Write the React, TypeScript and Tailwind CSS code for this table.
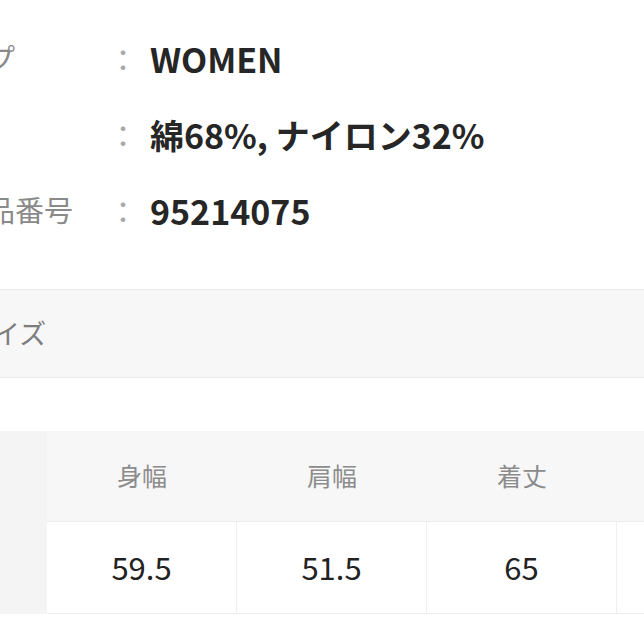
import React from 'react';

const font = { fontFamily: '"Noto Sans CJK JP", "Noto Sans", sans-serif' };

const specs = [
  { label: 'タイプ', value: 'WOMEN' },
  { label: '素材', value: '綿68%, ナイロン32%' },
  { label: '商品品番号', value: '95214075' },
];

const sizes = [
  { name: '身幅', value: '59.5' },
  { name: '肩幅', value: '51.5' },
  { name: '着丈', value: '65' },
  { name: '袖丈', value: '60' },
];

export default function App() {
  return (
    <div className="w-[644px] h-[644px] overflow-hidden bg-white" style={font}>
      <div className="pt-[20px] ml-[-72px]">
        {specs.map((s) => (
          <div key={s.label} className="flex items-center h-[76px]">
            <span className="w-[180px] shrink-0 text-[29px] text-[#8a8a8a] whitespace-nowrap">{s.label}</span>
            <span className="w-[24px] shrink-0 text-center text-[30px] text-[#a8a8a8]">：</span>
            <span className="ml-[18px] text-[34px] font-bold text-[#262626] whitespace-nowrap">{s.value}</span>
          </div>
        ))}
      </div>

      <div className="mt-[41px] h-[89px] border-y border-[#e9e9e9] bg-[#f7f7f7] flex items-center ml-[-34px]">
        <span className="text-[27px] text-[#7d7d7d]">サイズ</span>
      </div>

      <div className="mt-[53px] flex">
        <div className="w-[47px] shrink-0 bg-[#f4f4f4] h-[183px]" />
        <div className="flex">
          {sizes.map((c) => (
            <div key={c.name} className="w-[190px] shrink-0 flex flex-col">
              <div className="h-[91px] bg-[#f7f7f7] border-b border-[#ececec] flex items-center justify-center text-[25px] text-[#8c8c8c]">
                {c.name}
              </div>
              <div className="h-[92px] bg-white border-r border-b border-[#efefef] flex items-center justify-center text-[31px] text-[#222]">
                {c.value}
              </div>
            </div>
          ))}
        </div>
      </div>
    </div>
  );
}
